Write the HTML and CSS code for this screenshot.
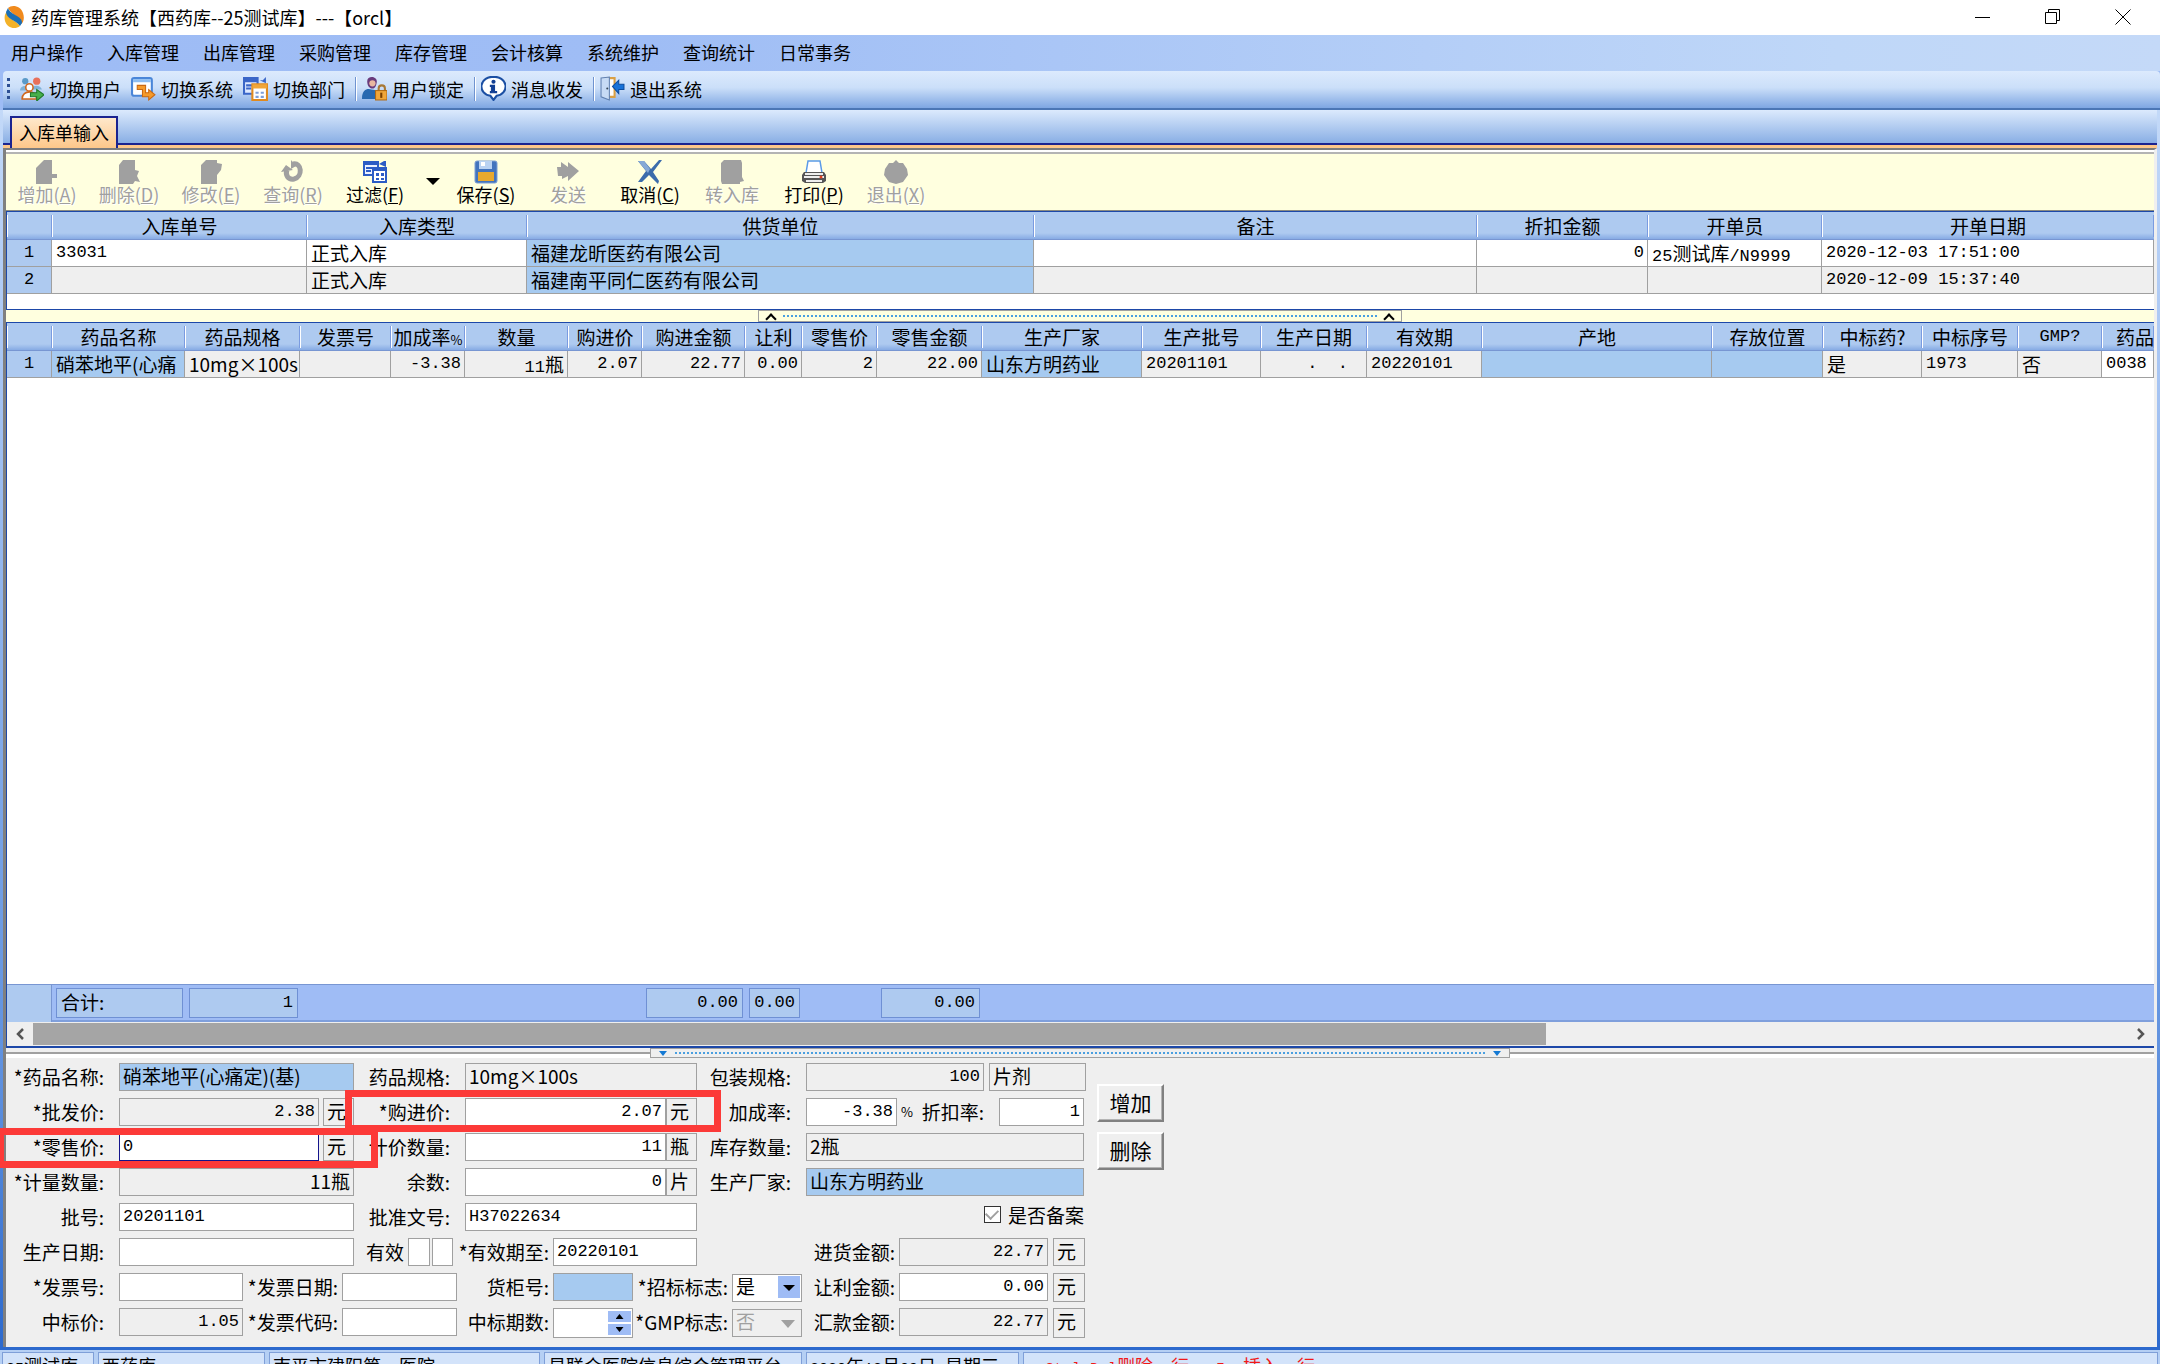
FILE: index.html
```html
<!DOCTYPE html>
<html lang="zh-CN">
<head>
<meta charset="utf-8">
<title>药库管理系统</title>
<link rel="stylesheet" href="styles.css">
</head>
<body>
<header class="titlebar">
  <svg class="logo" viewBox="0 0 22 24"><path d="M5 3C9-1 18 1 20 8c2 6 0 10-2 11 1-7-9-8-13-16z" fill="#f08a1d"/><path d="M17 21C12 25 4 23 2 16c-1-4 0-8 2-9 0 7 9 8 13 14z" fill="#f3b229"/><path d="M5 3c2 7 15 8 14 15l-2 3C13 15 3 14 3 7z" fill="#1b6fb5"/></svg>
  <h1>药库管理系统【西药库--25测试库】---【orcl】</h1>
  <div class="winbtns">
    <button aria-label="最小化"><svg viewBox="0 0 16 16"><path d="M0 8.500h15" stroke="#000"/></svg></button>
    <button aria-label="还原"><svg viewBox="0 0 16 16"><path d="M.5 3.500h11v11H.5zM3.500 3.500v-3h11v11h-3" fill="none" stroke="#000"/></svg></button>
    <button aria-label="关闭"><svg viewBox="0 0 16 16"><path d="M.5.5l15 15M15.500.5l-15 15" stroke="#000"/></svg></button>
  </div>
</header>

<nav class="menubar">
  <a href="#">用户操作</a><a href="#">入库管理</a><a href="#">出库管理</a><a href="#">采购管理</a><a href="#">库存管理</a><a href="#">会计核算</a><a href="#">系统维护</a><a href="#">查询统计</a><a href="#">日常事务</a>
</nav>

<div class="quickbar">
  <span class="grip"></span>
  <button class="qb"><svg viewBox="0 0 24 24"><circle cx="6" cy="5" r="3" fill="#5a9ac8"/><circle cx="17" cy="5" r="3.500" fill="#e8705a"/><path d="M1 14c0-6 9-6 10 0zM12 13c0-5 9-5 10 0z" fill="#7fb2d8"/><circle cx="10" cy="11" r="3.500" fill="#fff" stroke="#d0661c" stroke-width="1.500"/><path d="M3 22c0-9 14-9 14 0z" fill="#fff" stroke="#d0661c" stroke-width="1.500"/><path d="M11 16h6v-3l7 5-7 6v-4h-6z" fill="#47b04b" stroke="#1f7a2a"/></svg>切换用户</button>
  <button class="qb"><svg viewBox="0 0 24 24"><rect x="1" y="2" width="19" height="17" rx="2" fill="#fff" stroke="#4a86d8" stroke-width="2"/><path d="M2 3h17v3H2z" fill="#8dbdf2"/><path d="M6 9h8v7h3v-3l6 5-6 5v-3h-6v-7H6z" fill="#f59a2a" stroke="#c96812"/></svg>切换系统</button>
  <button class="qb"><svg viewBox="0 0 24 24"><path d="M1 2h13v15H1z" fill="#dfeaff" stroke="#3a66c8" stroke-width="2"/><path d="M1 2h13v4H1z" fill="#3a66c8"/><path d="M3 9h6M3 12h5" stroke="#3a66c8" stroke-width="2"/><path d="M16 4h3l3-3v6z" fill="#3a66c8"/><path d="M9 8h14v15H9z" fill="#fff" stroke="#e08a1e" stroke-width="2"/><path d="M9 8h14v4H9z" fill="#f0a63a"/><path d="M12 15h3v2h-3zM17 15h3v2h-3zM12 19h3v2h-3zM17 19h3v2h-3z" fill="#7e9ed8"/></svg>切换部门</button>
  <span class="sep"></span>
  <button class="qb"><svg viewBox="0 0 24 24"><path d="M5 5c0-6 11-5 9 2-1 5-3 5-4 5-3 0-5-3-5-7z" fill="#6a3b7c"/><circle cx="10" cy="7" r="3" fill="#e9b7a0"/><path d="M0 22c0-10 6-10 9-9 5 0 7 3 7 9z" fill="#2768b0"/><path d="M16 15v-3c0-4 6-4 6 0v3" fill="none" stroke="#a87835" stroke-width="2"/><rect x="13" y="14" width="11" height="9" fill="#f0a63a" stroke="#b06a12"/><path d="M18.500 16v5" stroke="#7a3f00" stroke-width="2"/></svg>用户锁定</button>
  <span class="sep"></span>
  <button class="qb"><svg viewBox="0 0 24 24"><path d="M12 1a10 9 0 0 1 3 18l-3 4-3-4A10 9 0 0 1 12 1z" fill="#fff" stroke="#1b4fa3" stroke-width="2"/><circle cx="12" cy="5.500" r="2" fill="#123f94"/><path d="M9 9h4v6h2v1H9v-1h1v-5H9z" fill="#123f94" stroke="#123f94"/></svg>消息收发</button>
  <span class="sep"></span>
  <button class="qb"><svg viewBox="0 0 24 24"><path d="M6 2h8v18H6z" fill="#fff" stroke="#d9a046" stroke-width="2"/><path d="M1 2l8-1v22l-8-3z" fill="#c7dbf5" stroke="#6080b0"/><circle cx="7" cy="12" r="1" fill="#345"/><path d="M12 10l6-6v4h5v5h-5v4z" fill="#1872d8" stroke="#0d4da0"/></svg>退出系统</button>
</div>

<main class="workspace">
  <div class="tabs"><button class="tab">入库单输入</button></div>
  <div class="client">
    <div class="actions">
      <button class="act" disabled><svg viewBox="0 0 24 24"><path d="M9 0h8v14h5v4h-5v6H1V8z" fill="#a0a0a0"/></svg><span>增加(<u>A</u>)</span></button>
      <button class="act" disabled><svg viewBox="0 0 24 24"><path d="M6 0h12v10l4 1-2 5 3 6-5-1-2 3H2V5z" fill="#a0a0a0"/></svg><span>删除(<u>D</u>)</span></button>
      <button class="act" disabled><svg viewBox="0 0 24 24"><path d="M7 0h11v3l5 1-1 6-4 5v9H2V5z" fill="#a0a0a0"/></svg><span>修改(<u>E</u>)</span></button>
      <button class="act" disabled><svg viewBox="0 0 24 24"><path d="M12 4c9-2 10 13 1 15-6 1-9-4-7-9" fill="none" stroke="#a0a0a0" stroke-width="5"/><path d="M0 12l5-7 7 5zM10 0v9l5-3z" fill="#a0a0a0"/></svg><span>查询(<u>R</u>)</span></button>
      <button class="act"><svg viewBox="0 0 24 24"><path d="M1 2h14v13H1z" fill="#eaf0ff" stroke="#2c5cc5" stroke-width="2"/><path d="M1 2h14v3H1zM16 4l5-3h2v6z" fill="#2c5cc5"/><path d="M3 8h6M3 11h5" stroke="#2c5cc5" stroke-width="2"/><path d="M10 8h13v14H10z" fill="#fff" stroke="#2c5cc5" stroke-width="2"/><path d="M10 8h13v3H10zM13 13h3v3h-3zM18 13h3v3h-3zM13 18h3v2h-3zM18 18h3v2h-3z" fill="#2c5cc5"/></svg><span>过滤(<u>F</u>)</span></button>
      <button class="drop" aria-label="更多过滤"></button>
      <button class="act"><svg viewBox="0 0 24 24"><rect x="1" y="1" width="22" height="22" rx="2" fill="#4374bd" stroke="#7d9fd4"/><path d="M5 1h13v8H5z" fill="#b9d2f2"/><path d="M7 2h4v4H7z" fill="#fff"/><path d="M4 12h16v9H4z" fill="#e8a92e"/></svg><span>保存(<u>S</u>)</span></button>
      <button class="act" disabled><svg viewBox="0 0 24 24"><path d="M1 7h4V2l7 5V2l11 9-11 10v-5l-6 3v-3H2z" fill="#a0a0a0"/></svg><span>发送</span></button>
      <button class="act"><svg viewBox="0 0 24 24"><path d="M0 1h6l7 8 8-9h3L15 12l6 9-1 3-9-9-7 7H0l8-11z" fill="#3c6cab"/><path d="M0 1h6l6 8-2 4z" fill="#86a9d6"/></svg><span>取消(<u>C</u>)</span></button>
      <button class="act" disabled><svg viewBox="0 0 24 24"><path d="M4 0h17l1 3v14l2 4-4 1v2H2l-1-3V3z" fill="#a0a0a0"/></svg><span>转入库</span></button>
      <button class="act"><svg viewBox="0 0 24 24"><path d="M6 1h12l2 12H4z" fill="#fff" stroke="#5a9ae8" stroke-width="1.500"/><path d="M2 12h20l2 3v6l-3 2H3l-3-2v-6z" fill="#555"/><path d="M3 13h18v2H3zM2 16h20v2H2zM4 20h16v2H4z" fill="#eee"/><circle cx="19" cy="17" r="1.500" fill="#e04020"/></svg><span>打印(<u>P</u>)</span></button>
      <button class="act" disabled><svg viewBox="0 0 24 24"><path d="M9 3l3-3 3 3h4l4 6 1 6-5 7-7 2-7-2-5-7 1-6 4-6z" fill="#a0a0a0"/></svg><span>退出(<u>X</u>)</span></button>
    </div>

    <section class="pane orders">
      <table class="grid">
        <colgroup><col style="width:45px"><col style="width:255px"><col style="width:220px"><col style="width:507px"><col style="width:443px"><col style="width:171px"><col style="width:174px"><col></colgroup>
        <thead><tr><th></th><th>入库单号</th><th>入库类型</th><th>供货单位</th><th>备注</th><th>折扣金额</th><th>开单员</th><th>开单日期</th></tr></thead>
        <tbody>
          <tr class="current"><th class="num">1</th><td class="num">33031</td><td>正式入库</td><td class="sky">福建龙昕医药有限公司</td><td></td><td class="num right">0</td><td><span class="num">25</span>测试库<span class="num">/N9999</span></td><td class="num">2020-12-03 17:51:00</td></tr>
          <tr><th class="num">2</th><td></td><td>正式入库</td><td class="sky">福建南平同仁医药有限公司</td><td></td><td></td><td></td><td class="num">2020-12-09 15:37:40</td></tr>
        </tbody>
      </table>
    </section>

    <div class="splitter yellow"><div class="handle up"><i></i><b></b><i></i></div></div>

    <section class="pane items">
      <table class="grid">
        <colgroup><col style="width:45px"><col style="width:133px"><col style="width:115px"><col style="width:91px"><col style="width:74px"><col style="width:103px"><col style="width:74px"><col style="width:103px"><col style="width:57px"><col style="width:75px"><col style="width:105px"><col style="width:160px"><col style="width:119px"><col style="width:106px"><col style="width:115px"><col style="width:230px"><col style="width:111px"><col style="width:99px"><col style="width:96px"><col style="width:84px"><col></colgroup>
        <thead><tr><th></th><th>药品名称</th><th>药品规格</th><th>发票号</th><th>加成率<span class="half">%</span></th><th>数量</th><th>购进价</th><th>购进金额</th><th>让利</th><th>零售价</th><th>零售金额</th><th>生产厂家</th><th>生产批号</th><th>生产日期</th><th>有效期</th><th>产地</th><th>存放位置</th><th>中标药?</th><th>中标序号</th><th class="num">GMP?</th><th class="cut">药品</th></tr></thead>
        <tbody>
          <tr><th class="num">1</th><td class="sky">硝苯地平(心痛</td><td>10mg×100s</td><td></td><td class="num right">-3.38</td><td class="right"><span class="num">11</span>瓶</td><td class="num right">2.07</td><td class="num right">22.77</td><td class="num right">0.00</td><td class="num right">2</td><td class="num right">22.00</td><td class="sky">山东方明药业</td><td class="num">20201101</td><td class="num right dots">.&nbsp; .</td><td class="num">20220101</td><td class="sky"></td><td class="sky"></td><td>是</td><td class="num">1973</td><td>否</td><td class="num white">0038</td></tr>
        </tbody>
      </table>
      <div class="blank"></div>
      <div class="totals">
        <span class="head"></span><output>合计:</output><output class="num right">1</output><span></span><output class="num right">0.00</output><output class="num right">0.00</output><span></span><output class="num right">0.00</output>
      </div>
      <div class="hscroll">
        <button aria-label="向左"><svg viewBox="0 0 10 12"><path d="M8 1L3 6l5 5" fill="none" stroke="#555" stroke-width="2.500"/></svg></button>
        <div class="track"><div class="thumb"></div></div>
        <button aria-label="向右"><svg viewBox="0 0 10 12"><path d="M2 1l5 5-5 5" fill="none" stroke="#555" stroke-width="2.500"/></svg></button>
      </div>
    </section>

    <div class="splitter gray"><div class="handle down"><i></i><b></b><i></i></div></div>

    <form class="detail">
      <div class="fields">
        <div class="row r1">
          <label class="wide" for="f1">*药品名称:</label><input id="f1" class="sky" value="硝苯地平(心痛定)(基)">
          <label class="wide" for="f2">药品规格:</label><input id="f2" class="ro" value="10mg×100s" readonly>
          <label class="wide" for="f3">包装规格:</label><input id="f3" class="ro num right" value="100" readonly>
          <span></span><input class="ro" aria-label="剂型" value="片剂" readonly>
        </div>
        <div class="row r2">
          <label class="wide" for="f4">*批发价:</label><input id="f4" class="ro num right" value="2.38" readonly><span></span><span class="unit">元</span>
          <label class="wide" for="f5">*购进价:</label><input id="f5" class="num right" value="2.07"><span class="unit">元</span>
          <label class="wide" for="f6">加成率:</label><input id="f6" class="num right" value="-3.38"><span class="half pct">%</span>
          <label class="wide" for="f7">折扣率:</label><input id="f7" class="num right" value="1">
        </div>
        <div class="row r3">
          <label class="wide" for="f8">*零售价:</label><input id="f8" class="num active" value="0"><span></span><span class="unit">元</span>
          <label class="wide" for="f9">计价数量:</label><input id="f9" class="num right" value="11"><span class="unit">瓶</span>
          <label class="wide" for="f10">库存数量:</label><input id="f10" class="ro" value="2瓶" readonly>
        </div>
        <div class="row r4">
          <label class="wide" for="f11">*计量数量:</label><input id="f11" class="ro right" value="11瓶" readonly>
          <label class="wide" for="f12">余数:</label><input id="f12" class="num right" value="0"><span class="unit">片</span>
          <label class="wide" for="f13">生产厂家:</label><input id="f13" class="sky" value="山东方明药业">
        </div>
        <div class="row r5">
          <label class="wide" for="f14">批号:</label><input id="f14" class="num" value="20201101">
          <label class="wide" for="f15">批准文号:</label><input id="f15" class="num" value="H37022634">
          <label class="check"><input type="checkbox" checked>是否备案</label>
        </div>
        <div class="row r6">
          <label class="wide" for="f16">生产日期:</label><input id="f16">
          <label for="f17">有效</label><input id="f17"><span></span><input aria-label="有效月">
          <label for="f18">*有效期至:</label><input id="f18" class="num" value="20220101">
          <label for="f19">进货金额:</label><input id="f19" class="ro num right" value="22.77" readonly><span></span><span class="unit">元</span>
        </div>
        <div class="row r7">
          <label class="wide" for="f20">*发票号:</label><input id="f20">
          <label for="f21">*发票日期:</label><input id="f21">
          <label for="f22">货柜号:</label><input id="f22" class="sky">
          <label for="f23">*招标标志:</label><span class="select"><select id="f23"><option>是</option><option>否</option></select></span>
          <label for="f24">让利金额:</label><input id="f24" class="num right" value="0.00"><span></span><span class="unit">元</span>
        </div>
        <div class="row r7">
          <label class="wide" for="f25">中标价:</label><input id="f25" class="ro num right" value="1.05" readonly>
          <label for="f26">*发票代码:</label><input id="f26">
          <label for="f27">中标期数:</label><span class="spin"><input id="f27"><button type="button" class="inc" aria-label="增"></button><button type="button" class="dec" aria-label="减"></button></span>
          <label for="f28">*GMP标志:</label><span class="select off"><select id="f28" disabled><option>否</option></select></span>
          <label for="f29">汇款金额:</label><input id="f29" class="ro num right" value="22.77" readonly><span></span><span class="unit">元</span>
        </div>
      </div>
      <div class="ops"><button type="button">增加</button><button type="button">删除</button></div>
      <div class="mark buy"></div>
      <div class="mark retail"></div>
    </form>
  </div>
</main>

<footer class="status">
  <span class="s1"><span class="num">25</span>测试库</span><span class="s2">西药库</span><span class="s3">南平市建阳第一医院</span><span class="s4">易联众医院信息综合管理平台</span><span class="s5"><span class="num">2020</span>年<span class="num">12</span>月<span class="num">09</span>日<span class="num"> </span>星期三</span><span class="hint"><span class="num">Ctrl+Del</span>删除一行<span class="num">&nbsp;&nbsp; Ins</span>插入一行</span>
</footer>
</body>
</html>
```
FILE: styles.css
```css
* { box-sizing: border-box; }
html, body { height: 100%; margin: 0; }
body {
  display: flex;
  flex-direction: column;
  min-width: 1200px;
  overflow: hidden;
  background: #9ebcf5;
  color: #000;
  font: 18px/24px "Noto Sans CJK SC", sans-serif;
}
button, input, select { font: inherit; color: inherit; margin: 0; border-radius: 0; }
button { padding: 0; border: 0; background: none; }
a { color: inherit; text-decoration: none; }
.num { font-family: "Liberation Mono", "Noto Sans CJK SC", monospace; font-size: 17px; }
.right { text-align: right; }
.half { font-size: 13px; line-height: 1; }

/* title bar */
.titlebar { display: flex; align-items: center; height: 35px; flex: none; background: #fff; padding: 0 2px 2px 3px; }
.logo { width: 22px; height: 24px; margin-right: 6px; }
.titlebar h1 { flex: 1; margin: 0; font-size: 18px; font-weight: 400; line-height: 32px; }
.winbtns { display: flex; }
.winbtns button { width: 70px; height: 32px; display: flex; align-items: center; justify-content: center; }
.winbtns svg { width: 16px; height: 16px; }

/* menus */
.menubar { display: flex; gap: 24px; align-items: center; height: 36px; flex: none; padding: 0 0 3px 11px; background: linear-gradient(90deg, #9ebcf5, #9fbdf5 30%, #bfd7f8 85%, #c4d9f8); }
.quickbar { display: flex; align-items: center; height: 39px; flex: none; margin-left: 3px; padding-bottom: 2px; border-bottom: 2px solid #4b76b5; border-radius: 4px 4px 0 0; background: linear-gradient(#dceafd, #cbdff9 45%, #7ea6e2); }
.grip { width: 3px; height: 22px; margin: 0 9px 0 4px; background: repeating-linear-gradient(#2c4f94 0 3px, transparent 3px 6px); }
.qb { display: flex; align-items: center; gap: 5px; margin-right: 10px; white-space: nowrap; }
.qb svg { width: 25px; height: 25px; }
.sep { width: 2px; height: 24px; margin-right: 5px; border-left: 1px solid #6f93d0; background: #fff; }

/* work area */
.workspace { display: flex; flex-direction: column; flex: 1; min-height: 0; padding: 0 3px 3px; background: linear-gradient(#c3d9f8, #a9c6f3 20%, #5b8edd 80%, #2c69cd); }
.tabs { display: flex; align-items: flex-end; height: 38px; flex: none; padding-left: 7px; border-bottom: 3px solid #fdc78a; background: linear-gradient(#dceafd, #84abe3); box-shadow: inset 0 -2px 0 #1a2390; }
.tab { width: 108px; height: 32px; margin-bottom: -3px; padding-bottom: 3px; border: 2px solid #1a2390; border-bottom: 0; background: linear-gradient(#fee8cb, #fdc78a); }
.client { display: flex; flex-direction: column; flex: 1; min-height: 0; border-left: 3px solid #808080; border-right: 3px solid #efefef; border-top: 2px solid #7c7c7c; background: #efefef; }

.actions { display: flex; height: 61px; flex: none; padding: 6px 0 0; border-top: 2px solid #fff; border-bottom: 1px solid #8a8a80; background: #ffffdf; box-shadow: inset 0 2px 0 #b4b4b4; }
.act { display: flex; flex-direction: column; align-items: center; width: 82px; }
.act svg { width: 24px; height: 24px; flex: none; margin-top: 2px; }
.act span { line-height: 20px; white-space: nowrap; }
.act:disabled { color: #a0a0a0; text-shadow: 1px 1px 0 #fff; }
.drop { width: 29px; height: 7px; margin-top: 20px; background: #000; clip-path: polygon(10px 0, 24px 0, 17px 7px); }

/* grids */
.pane { border: 1px solid #1d48a8; border-right: 0; background: #fff; overflow: hidden; }
.orders { flex: none; padding-bottom: 15px; }
.items { display: flex; flex-direction: column; flex: 1; min-height: 0; border-bottom-width: 2px; }
.blank { flex: 1; }
.grid { width: 100%; table-layout: fixed; border-collapse: separate; border-spacing: 0; }
.grid th, .grid td { padding: 0 3px; font-size: 19px; font-weight: 400; line-height: 22px; height: 27px; vertical-align: middle; white-space: nowrap; overflow: hidden; border-right: 1px solid #a0a0a0; border-bottom: 1px solid #a0a0a0; }
.grid td { background: #efefef; text-align: left; padding-left: 4px; }
.grid .current td, .grid td.white { background: #fff; }
.grid td.sky, .grid .current td.sky { background: #a6caf0; }
.grid td.right { text-align: right; }
.grid td.dots { padding-right: 18px; }
.grid td.num, .grid th.num { font-size: 17px; }
.grid td .num { line-height: 16px; }
.grid th { background: #aecaf0; text-align: center; }
.grid thead th {
  height: 28px;
  padding: 0;
  border-right: 0;
  border-bottom-color: #7896d2;
  background:
    linear-gradient(#7a9be0, #7a9be0) right center / 1px 22px no-repeat,
    linear-gradient(#fff, #fff) left center / 1px 22px no-repeat,
    linear-gradient(#aecaf0 78%, #87abe4);
}
.grid thead th.cut { text-align: left; padding-left: 14px; }

.totals { display: grid; grid-template-columns: 45px 133px 115px 342px 103px 57px 75px 105px 1fr; flex: none; height: 38px; border-top: 1px solid #7896d2; border-bottom: 2px solid #7f9fdc; background: #9fbcf5; font-size: 19px; }
.totals .head { background: #aecaf0; border-right: 1px solid #7896d2; }
.totals output { margin: 3px 2px 4px 4px; padding: 0 4px; border: 1px solid #6f90d4; background: #aecaf0; line-height: 26px; }
.totals output.num { font-size: 17px; line-height: 28px; }

.hscroll { display: flex; flex: none; height: 24px; background: #efefef; }
.hscroll button { width: 26px; display: flex; align-items: center; justify-content: center; }
.hscroll svg { width: 10px; height: 12px; }
.track { flex: 1; padding: 1px 0; }
.thumb { width: 72.2%; height: 22px; background: #a5a5a5; }

.splitter { display: flex; justify-content: center; flex: none; }
.splitter.yellow { height: 12px; background: #ffffdf; }
.splitter.gray { height: 10px; background: linear-gradient(#efefef 4px, #a0a0a0 4px 6px, #fff 6px); }
.handle { display: flex; align-items: center; gap: 8px; padding: 0 8px; border: 1px solid #a0a0a0; }
.handle b { flex: 1; height: 2px; background: repeating-linear-gradient(90deg, #4a9fe0 0 2px, transparent 2px 4px); }
.handle.up { width: 30%; }
.handle.up i { width: 8px; height: 8px; margin-top: 6px; border: solid #000; border-width: 2px 0 0 2px; transform: rotate(45deg); }
.handle.down { width: 40%; background: #efefef; }
.handle.down i { border: 4px solid transparent; border-top: 5px solid #1479d4; border-bottom: 0; }

/* detail form */
.detail { position: relative; display: flex; gap: 11px; flex: none; padding: 5px 0 11px 1px; font-size: 19px; line-height: 26px; }
.fields { display: flex; flex-direction: column; gap: 7px; }
.row { display: grid; height: 28px; }
.row label { text-align: right; white-space: nowrap; padding-right: 4px; line-height: 28px; }
.row label.wide { padding-right: 15px; }
.row input, .row select { width: 100%; height: 28px; min-width: 0; padding: 0 3px 3px; border: 1px solid #a0a0a0; background: #fff; outline: 0; line-height: 22px; }
.row input.num { padding-bottom: 1px; font-size: 17px; }
.row input.ro { background: #efefef; }
.row input.sky { background: #a6caf0; }
.row input.active { border-color: #14148c; }
.unit { padding-left: 3px; border: 1px solid #a0a0a0; line-height: 23px; }
.pct { padding-left: 4px; line-height: 28px; }
.r1 { grid-template-columns: 112px 235px 111px 232px 109px 178px 5px 97px; }
.r2 { grid-template-columns: 112px 200px 4px 31px 111px 201px 31px 109px 91px 15px 87px 85px; }
.r3 { grid-template-columns: 112px 200px 4px 31px 111px 201px 31px 109px 278px; }
.r4 { grid-template-columns: 112px 235px 111px 201px 31px 109px 278px; }
.r5 { grid-template-columns: 112px 235px 111px 232px 387px; }
.r6 { grid-template-columns: 112px 235px 54px 22px 2px 21px 100px 144px 202px 149px 5px 32px; }
.r7 { grid-template-columns: 112px 124px 99px 115px 96px 80px 99px 70px 97px 149px 5px 32px; }
.row .check { display: flex; align-items: center; justify-content: flex-end; gap: 7px; padding: 0 0 5px; line-height: 22px; }
.row .check input { appearance: none; width: 17px; height: 17px; padding: 0; border: 1px solid #333; display: grid; place-items: center; }
.row .check input:checked::after { content: ""; width: 6px; height: 10px; margin-bottom: 3px; border: solid #a0a0a0; border-width: 0 2px 2px 0; transform: rotate(45deg); }
.select { position: relative; }
.row select { appearance: none; opacity: 1; }
.select::after { content: ""; position: absolute; top: 3px; right: 2px; width: 22px; height: 22px; pointer-events: none; background: #9fbcf5; }
.select::before { content: ""; position: absolute; z-index: 1; top: 12px; right: 7px; border: 6px solid transparent; border-top-color: #000; border-bottom: 0; pointer-events: none; }
.select.off select { background: #efefef; color: #a0a0a0; }
.select.off::after { background: none; }
.select.off::before { border-top-color: #a0a0a0; border-width: 8px 7px 0; }
.spin { display: grid; grid-template: 14px 14px / 54px 23px 3px; border: 1px solid #a0a0a0; background: #fff; }
.row .spin input { grid-row: 1 / 3; height: 26px; border: 0; }
.spin button { position: relative; grid-column: 2; height: 11px; margin-top: 2px; background: #9fbcf5; }
.spin .dec { margin-top: 1px; }
.spin button::after { content: ""; display: block; width: 8px; height: 5px; margin: 0 auto; background: #000; clip-path: polygon(50% 0, 100% 100%, 0 100%); }
.spin .dec::after { clip-path: polygon(0 0, 100% 0, 50% 100%); }
.ops { display: flex; flex-direction: column; gap: 10px; padding-top: 21px; }
.ops button { width: 67px; height: 38px; border: 2px solid; border-color: #fff #808080 #808080 #fff; background: #efefef; font-size: 21px; line-height: 30px; padding-bottom: 2px; box-shadow: inset -1px -1px 0 #b4b4b4; }

/* red annotation frames over the price fields */
.mark { position: absolute; border: 7px solid #fc3a38; pointer-events: none; }
.mark.buy { left: 339px; top: 32px; width: 376px; height: 42px; }
.mark.retail { left: -6px; top: 70px; width: 378px; height: 40px; border-left-width: 4px; }

/* status bar */
.status { display: flex; gap: 4px; flex: none; height: 14px; padding: 2px 2px 0; overflow: hidden; background: #b5cff4; }
.status > span { flex: none; height: 32px; padding: 0 3px; border: 1px solid #7f9fd8; background: #d3e3fa; white-space: pre; line-height: 24px; }
.status .num { font-size: 15px; }
.s1 { width: 92px; }
.s2 { width: 167px; }
.s3 { width: 271px; }
.s4 { width: 258px; }
.s5 { width: 213px; }
.status > .hint { flex: 1; padding-left: 21px; color: #f01818; }
```
